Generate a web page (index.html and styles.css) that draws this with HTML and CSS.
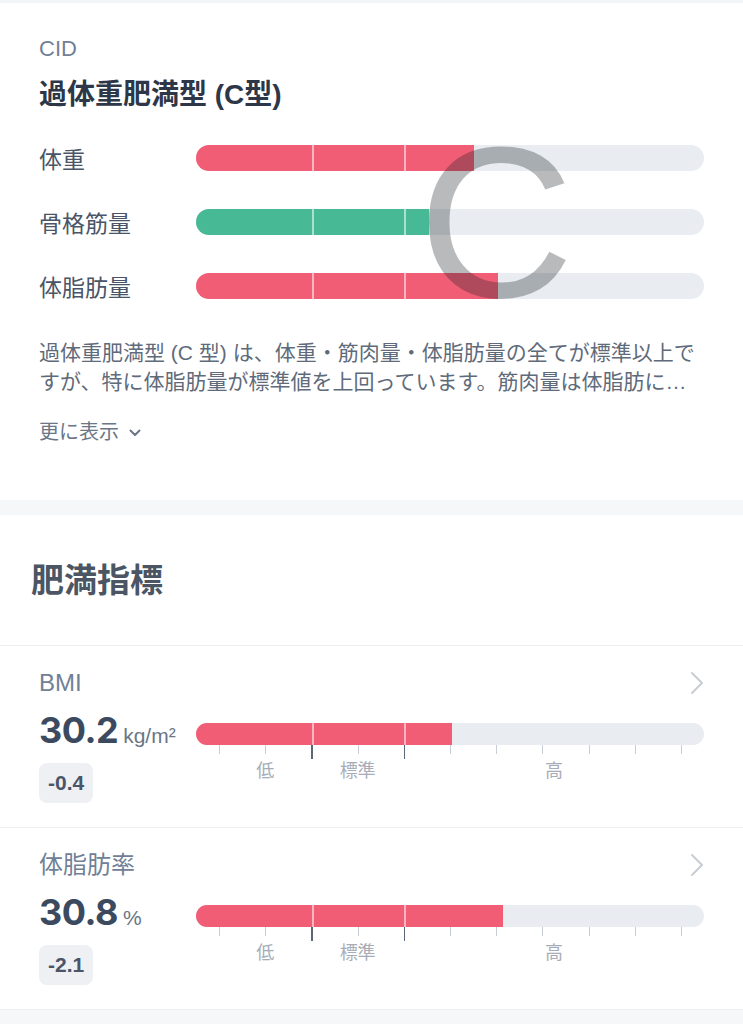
FILE: index.html
```html
<!DOCTYPE html>
<html lang="ja">
<head>
  <meta charset="UTF-8" />
  <title>CID / 肥満指標</title>
  <link rel="stylesheet" href="styles.css">
</head>
<body>
  <div class="strip"></div>

  <section class="card cid">
    <div class="cid-label">CID</div>
    <h2 class="cid-title">過体重肥満型 (C型)</h2>

    <div class="cid-rows">
      <div class="cid-row">
        <span class="row-label">体重</span>
        <div class="bar">
          <div class="fill red" style="width:54.7%"></div>
          <i class="split s1"></i><i class="split s2"></i>
        </div>
      </div>
      <div class="cid-row">
        <span class="row-label">骨格筋量</span>
        <div class="bar">
          <div class="fill green" style="width:45.9%"></div>
          <i class="split s1"></i><i class="split s2"></i>
        </div>
      </div>
      <div class="cid-row">
        <span class="row-label">体脂肪量</span>
        <div class="bar">
          <div class="fill red" style="width:59.4%"></div>
          <i class="split s1"></i><i class="split s2"></i>
        </div>
      </div>
      <span class="cid-mark">C</span>
    </div>

    <p class="cid-desc">過体重肥満型 (C 型) は、体重・筋肉量・体脂肪量の全てが標準以上ですが、特に体脂肪量が標準値を上回っています。筋肉量は体脂肪に…</p>

    <div class="more">
      更に表示
      <svg width="12" height="8" viewBox="0 0 12 8"><path d="M1.5 1.5 L6 6 L10.5 1.5" fill="none" stroke="#6b7686" stroke-width="2" stroke-linecap="round" stroke-linejoin="round"/></svg>
    </div>
  </section>

  <div class="gap"></div>

  <section class="card index">
    <h2 class="index-title">肥満指標</h2>

    <div class="metric">
      <div class="metric-head">
        <span>BMI</span>
        <svg class="chev" width="14" height="24" viewBox="0 0 14 24"><path d="M2 2 L12 12 L2 22" fill="none" stroke="#c9cdd3" stroke-width="2" stroke-linecap="round" stroke-linejoin="round"/></svg>
      </div>
      <div class="metric-body">
        <div class="metric-left">
          <div class="value">30.2<span class="unit">kg/m²</span></div>
          <span class="badge">-0.4</span>
        </div>
        <div class="metric-right">
          <div class="bar thin">
            <div class="fill red" style="width:50.4%"></div>
            <i class="split s1"></i><i class="split s2"></i>
          </div>
          <div class="ticks">
            <span></span><span></span><span class="major"></span><span></span><span class="major"></span><span></span><span></span><span></span><span></span><span></span><span></span>
          </div>
          <div class="scale">
            <span class="pad"></span><span class="low">低</span><span class="std">標準</span><span class="high">高</span>
          </div>
        </div>
      </div>
    </div>

    <div class="metric">
      <div class="metric-head">
        <span>体脂肪率</span>
        <svg class="chev" width="14" height="24" viewBox="0 0 14 24"><path d="M2 2 L12 12 L2 22" fill="none" stroke="#c9cdd3" stroke-width="2" stroke-linecap="round" stroke-linejoin="round"/></svg>
      </div>
      <div class="metric-body">
        <div class="metric-left">
          <div class="value">30.8<span class="unit">%</span></div>
          <span class="badge">-2.1</span>
        </div>
        <div class="metric-right">
          <div class="bar thin">
            <div class="fill red" style="width:60.4%"></div>
            <i class="split s1"></i><i class="split s2"></i>
          </div>
          <div class="ticks">
            <span></span><span></span><span class="major"></span><span></span><span class="major"></span><span></span><span></span><span></span><span></span><span></span><span></span>
          </div>
          <div class="scale">
            <span class="pad"></span><span class="low">低</span><span class="std">標準</span><span class="high">高</span>
          </div>
        </div>
      </div>
    </div>
  </section>

  <div class="gap"></div>
</body>
</html>
```

FILE: styles.css
```css
* {
  box-sizing: border-box;
}

body {
  margin: 0;
  background: #fff;
  font-family: "Liberation Sans", "Noto Sans CJK JP", sans-serif;
  color: #2d3748;
}

.strip {
  height: 3px;
  background: #f3f4f7;
}

.gap {
  height: 15px;
  background: #f5f7f9;
}

.card {
  background: #fff;
}

/* CID card */
.cid {
  padding: 32px 39px 53px;
}

.cid-label {
  font-size: 22px;
  line-height: 28px;
  color: #718096;
}

.cid-title {
  margin: 14px 0 0;
  font-size: 28px;
  line-height: 36px;
  font-weight: 700;
  color: #2d3748;
}

.cid-rows {
  position: relative;
  margin-top: 13px;
}

.cid-row {
  display: flex;
  align-items: center;
  height: 64px;
}

.row-label {
  width: 157px;
  flex: none;
  font-size: 23px;
  color: #4a5568;
}

.bar {
  position: relative;
  flex: 1;
  height: 26px;
  border-radius: 13px;
  background: #e9ecf1;
  overflow: hidden;
}

.bar.thin {
  height: 22px;
  border-radius: 11px;
}

.fill {
  height: 100%;
}

.fill.red {
  background: #f25d76;
}

.fill.green {
  background: #47b995;
}

.split {
  position: absolute;
  top: 0;
  bottom: 0;
  width: 2px;
  background: rgba(255, 255, 255, 0.55);
}

.split.s1 {
  left: 22.9%;
}

.split.s2 {
  left: 41%;
}

.cid-mark {
  position: absolute;
  left: 379px;
  top: -12px;
  font-family: "Liberation Sans", sans-serif;
  font-size: 216px;
  line-height: 1;
  color: rgba(20, 26, 34, 0.3);
  pointer-events: none;
}

.cid-desc {
  margin: 20px 0 0;
  font-size: 21px;
  line-height: 29px;
  color: #5f6b7a;
}

.more {
  display: flex;
  align-items: center;
  gap: 10px;
  margin-top: 22px;
  font-size: 20px;
  line-height: 29px;
  color: #6b7686;
}

/* obesity index card */
.index-title {
  margin: 0;
  padding: 46px 31px 44px;
  font-size: 33px;
  line-height: 40px;
  font-weight: 700;
  color: #4b5563;
  border-bottom: 1px solid #eceef2;
}

.metric {
  padding: 23px 39px 24px;
  border-bottom: 1px solid #eceef2;
}

.metric-head {
  display: flex;
  justify-content: space-between;
  align-items: center;
  height: 28px;
  font-size: 24px;
  line-height: 28px;
  color: #718096;
}

.metric-body {
  display: flex;
  margin-top: 13px;
}

.metric-left {
  width: 157px;
  flex: none;
  display: flex;
  flex-direction: column;
  align-items: flex-start;
}

.value {
  display: flex;
  align-items: baseline;
  height: 40px;
  font-family: "Inter", "Liberation Sans", sans-serif;
  font-size: 36px;
  line-height: 40px;
  font-weight: 700;
  color: #3c4a5f;
  letter-spacing: -0.5px;
}

.unit {
  margin-left: 5px;
  font-family: "Liberation Sans", sans-serif;
  font-size: 21px;
  line-height: 1;
  font-weight: 400;
  letter-spacing: 0;
  color: #6b7686;
}

.badge {
  margin-top: 13px;
  height: 40px;
  line-height: 40px;
  padding: 0 9px;
  border-radius: 8px;
  background: #eef0f4;
  font-size: 21px;
  font-weight: 700;
  color: #4a5568;
}

.metric-right {
  flex: 1;
  padding-top: 13px;
}

.metric-right .bar {
  flex: none;
}

.ticks {
  display: flex;
  height: 14px;
}

.ticks span {
  flex: 1;
  position: relative;
}

.ticks span::before {
  content: "";
  position: absolute;
  left: 50%;
  top: 0;
  width: 1px;
  height: 9px;
  background: #c9ced6;
}

.ticks span.major::before {
  width: 1.5px;
  height: 14px;
  background: #5b6676;
}

.scale {
  display: flex;
  font-size: 18px;
  line-height: 24px;
  color: #a6adb8;
  text-align: center;
}

.scale .pad {
  width: 4.55%;
}

.scale .low,
.scale .std {
  width: 18.18%;
}

.scale .high {
  width: 59.09%;
}
```
